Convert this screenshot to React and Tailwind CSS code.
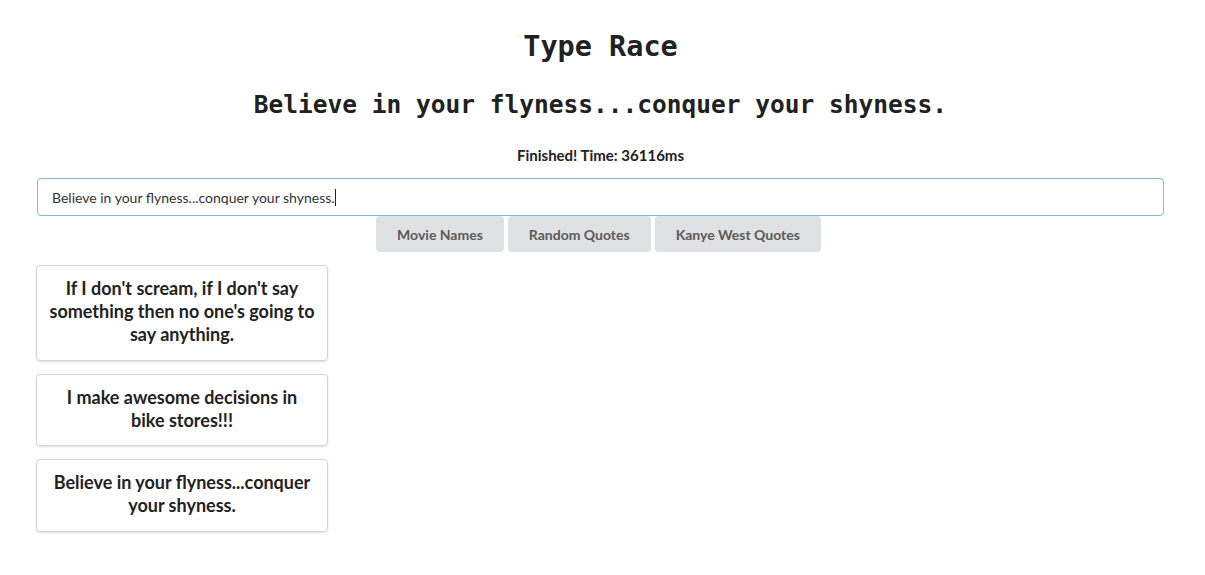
import React from 'react';

const quotes = [
    "If I don't scream, if I don't say something then no one's going to say anything.",
    'I make awesome decisions in bike stores!!!',
    'Believe in your flyness...conquer your shyness.',
];

const categories = ['Movie Names', 'Random Quotes', 'Kanye West Quotes'];

const App = () => {
    return (
        <div className="min-h-[575px] bg-white text-[#212121] font-['Lato','Liberation_Sans',sans-serif] text-[14px]">
            <div className="w-[1127px] ml-[37px] pt-[28px]">
                <h1 className="text-center font-['DejaVu_Sans_Mono',monospace] font-bold text-[28.5px] leading-[37px]">
                    Type Race
                </h1>
                <h2 className="mt-[24px] text-center font-['DejaVu_Sans_Mono',monospace] font-bold text-[24.5px] leading-[32px]">
                    Believe in your flyness...conquer your shyness.
                </h2>
                <p className="mt-[24px] text-center font-bold text-[15px] leading-[20px]">Finished! Time: 36116ms</p>
                <div className="mt-[13px] h-[38px] rounded-[4px] border border-[#85b7d9] flex items-center px-[14px] text-[#333]">
                    <span>Believe in your flyness...conquer your shyness.</span>
                    <span className="w-px h-[17px] bg-[#222]" />
                </div>
                <div className="flex justify-center gap-[4px] ml-[-4px]">
                    {categories.map((c) => (
                        <button
                            key={c}
                            className="h-[36px] px-[21px] rounded-[4px] bg-[#e0e1e2] text-[#5a5a5a] font-bold text-[14px]"
                        >
                            {c}
                        </button>
                    ))}
                </div>
                <div className="mt-[13px] flex flex-col gap-[13px] w-[292px] ml-[-1px]">
                    {quotes.map((q) => (
                        <div
                            key={q}
                            className="rounded-[4px] border border-[#d4d4d5] shadow-[0_1px_2px_0_rgba(34,36,38,0.15)] px-[12px] pt-[11px] pb-[13.5px] text-center font-bold text-[18px] leading-[23px] text-[#222]"
                        >
                            {q}
                        </div>
                    ))}
                </div>
            </div>
        </div>
    );
};

export default App;
